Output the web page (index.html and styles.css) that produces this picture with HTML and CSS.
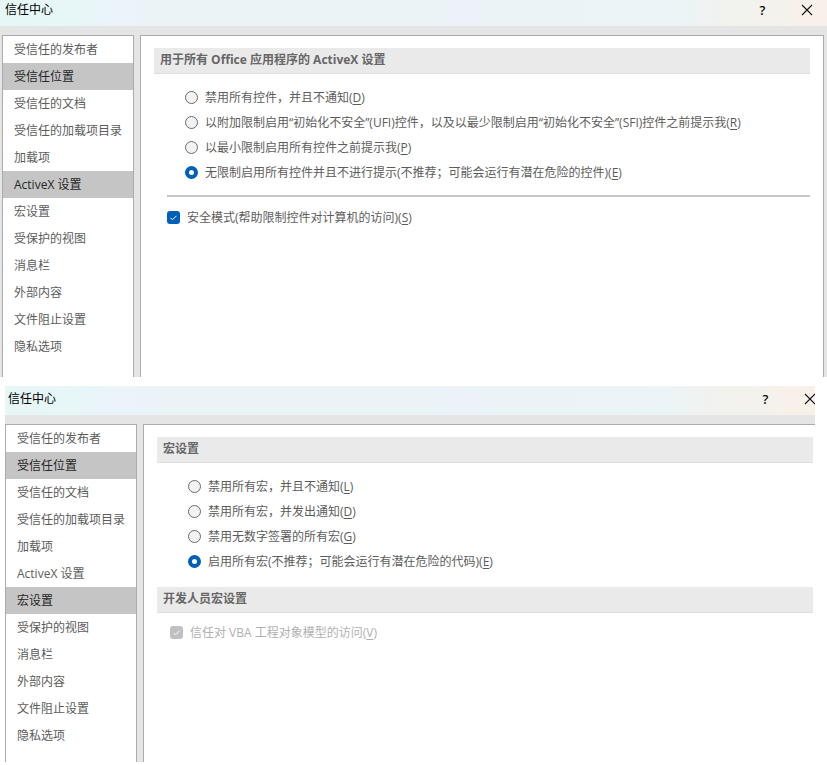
FILE: index.html
```html
<!DOCTYPE html>
<html lang="zh-CN">
<head>
<meta charset="utf-8">
<meta name="viewport" content="width=device-width, initial-scale=1">
<title>信任中心</title>
<link rel="stylesheet" href="styles.css">
</head>
<body>
<section class="dialog" aria-label="信任中心 ActiveX 设置">
  <header class="titlebar">
    <h1 class="title">信任中心</h1>
    <button class="caption-btn" type="button" aria-label="帮助">?</button>
    <button class="caption-btn" type="button" aria-label="关闭"><svg class="close-icon" viewBox="0 0 12 12" aria-hidden="true"><path d="M1 1 11 11M11 1 1 11"/></svg></button>
  </header>
  <div class="body">
    <nav class="sidebar">
      <a class="item" href="#">受信任的发布者</a>
      <a class="item selected" href="#">受信任位置</a>
      <a class="item" href="#">受信任的文档</a>
      <a class="item" href="#">受信任的加载项目录</a>
      <a class="item" href="#">加载项</a>
      <a class="item selected" href="#">ActiveX 设置</a>
      <a class="item" href="#">宏设置</a>
      <a class="item" href="#">受保护的视图</a>
      <a class="item" href="#">消息栏</a>
      <a class="item" href="#">外部内容</a>
      <a class="item" href="#">文件阻止设置</a>
      <a class="item" href="#">隐私选项</a>
    </nav>
    <main class="panel">
      <h2 class="heading">用于所有 Office 应用程序的 ActiveX 设置</h2>
      <div class="options">
        <label class="option"><input class="radio" type="radio" name="activex"><span>禁用所有控件，并且不通知(<u>D</u>)</span></label>
        <label class="option"><input class="radio" type="radio" name="activex"><span>以附加限制启用“初始化不安全”(UFI)控件，以及以最少限制启用“初始化不安全”(SFI)控件之前提示我(<u>R</u>)</span></label>
        <label class="option"><input class="radio" type="radio" name="activex"><span>以最小限制启用所有控件之前提示我(<u>P</u>)</span></label>
        <label class="option"><input class="radio" type="radio" name="activex" checked><span>无限制启用所有控件并且不进行提示(不推荐；可能会运行有潜在危险的控件)(<u>E</u>)</span></label>
      </div>
      <hr class="divider">
      <label class="option check-row"><span class="check"><input class="box" type="checkbox" checked><svg class="tick" viewBox="0 0 13 13" aria-hidden="true"><path d="M3.5 6.8 5.5 8.8 9.5 4.8"/></svg></span><span>安全模式(帮助限制控件对计算机的访问)(<u>S</u>)</span></label>
    </main>
  </div>
</section>

<section class="dialog cropped" aria-label="信任中心 宏设置">
  <header class="titlebar">
    <h1 class="title">信任中心</h1>
    <button class="caption-btn" type="button" aria-label="帮助">?</button>
    <button class="caption-btn" type="button" aria-label="关闭"><svg class="close-icon" viewBox="0 0 12 12" aria-hidden="true"><path d="M1 1 11 11M11 1 1 11"/></svg></button>
  </header>
  <div class="body">
    <nav class="sidebar">
      <a class="item" href="#">受信任的发布者</a>
      <a class="item selected" href="#">受信任位置</a>
      <a class="item" href="#">受信任的文档</a>
      <a class="item" href="#">受信任的加载项目录</a>
      <a class="item" href="#">加载项</a>
      <a class="item" href="#">ActiveX 设置</a>
      <a class="item selected" href="#">宏设置</a>
      <a class="item" href="#">受保护的视图</a>
      <a class="item" href="#">消息栏</a>
      <a class="item" href="#">外部内容</a>
      <a class="item" href="#">文件阻止设置</a>
      <a class="item" href="#">隐私选项</a>
    </nav>
    <main class="panel">
      <h2 class="heading">宏设置</h2>
      <div class="options">
        <label class="option"><input class="radio" type="radio" name="macro"><span>禁用所有宏，并且不通知(<u>L</u>)</span></label>
        <label class="option"><input class="radio" type="radio" name="macro"><span>禁用所有宏，并发出通知(<u>D</u>)</span></label>
        <label class="option"><input class="radio" type="radio" name="macro"><span>禁用无数字签署的所有宏(<u>G</u>)</span></label>
        <label class="option"><input class="radio" type="radio" name="macro" checked><span>启用所有宏(不推荐；可能会运行有潜在危险的代码)(<u>E</u>)</span></label>
      </div>
      <h2 class="heading">开发人员宏设置</h2>
      <label class="option check-row disabled"><span class="check"><input class="box" type="checkbox" checked disabled><svg class="tick" viewBox="0 0 13 13" aria-hidden="true"><path d="M3.5 6.8 5.5 8.8 9.5 4.8"/></svg></span><span>信任对 VBA 工程对象模型的访问(<u>V</u>)</span></label>
    </main>
  </div>
</section>
</body>
</html>
```
FILE: styles.css
```css
* {
  box-sizing: border-box;
}

body {
  margin: 0;
  background: #fff;
  color: #5c5c5c;
  font: 12px/20px "Open Sans", "Noto Sans CJK SC", sans-serif;
}

.dialog {
  background: #e5e5e5;
}

.titlebar {
  display: flex;
  align-items: center;
  padding: 0 0 6px 5px;
  background: linear-gradient(90deg, #e6f7f6 0%, #e8f6f7 10%, #ebf3fb 13%, #ebf3fb 16%, #eaf4f7 19%, #eaf4f7 53%, #edf2f9 56%, #eaf4f7 60%, #ebf4f6 82%, #f2f2ee 88%, #f3f2ed 93%, #f8f1ea 97%);
  color: #000;
}

.title {
  flex: 1;
  margin: 0;
  font-size: 12px;
  font-weight: 400;
}

.caption-btn {
  display: flex;
  flex: none;
  align-items: center;
  justify-content: center;
  width: 45px;
  height: 20px;
  padding: 0;
  border: 0;
  background: none;
  color: #000;
  font: 500 13px/20px "Noto Sans", sans-serif;
}

.caption-btn:last-child {
  width: 40px;
  margin-left: 2px;
}

.close-icon {
  width: 12px;
  height: 12px;
  fill: none;
  stroke: #111;
  stroke-width: 1.1;
}

.body {
  display: flex;
  gap: 6px;
  padding: 9px 3px 0 2px;
}

.sidebar {
  flex: none;
  width: 132px;
  padding-bottom: 17px;
  border: 1px solid #ababab;
  border-bottom: 0;
  background: #fff;
}

.item {
  display: block;
  padding: 0 11px;
  color: #5c5c5c;
  line-height: 27px;
  text-decoration: none;
  white-space: nowrap;
}

.item.selected {
  background: #c5c5c5;
  color: #262626;
}

.panel {
  flex: 1;
  min-width: 0;
  padding: 12px 13px 0;
  border: 1px solid #ababab;
  border-bottom: 0;
  background: #fff;
}

.heading {
  margin: 0;
  padding: 0 6px 2px;
  border-bottom: 1px solid #dedede;
  background: #eaeaea;
  color: #666;
  font-size: 12px;
  font-weight: 700;
  line-height: 23px;
}

.options {
  padding: 11px 0 13px 31px;
}

.option {
  display: flex;
  align-items: center;
  gap: 7px;
  min-height: 25px;
}

.option u {
  text-underline-offset: 2px;
}

.radio,
.box {
  flex: none;
  width: 13px;
  height: 13px;
  margin: 0;
  appearance: none;
}

.radio {
  border: 1px solid #6b6b6b;
  border-radius: 50%;
  background: #f3f3f3;
}

.radio:checked {
  border: 4px solid #005fb8;
  background: #fff;
}

.divider {
  height: 2px;
  margin: -3px 0 8px 13px;
  border: 0;
  background: #c6c6c6;
}

.check-row {
  padding-left: 13px;
}

.check {
  display: grid;
  flex: none;
}

.box,
.tick {
  grid-area: 1 / 1;
}

.box {
  border-radius: 3px;
  background: #005fb8;
}

.tick {
  width: 13px;
  height: 13px;
  fill: none;
  stroke: #fff;
  pointer-events: none;
}

.disabled {
  margin-top: 7px;
  color: #b1b1b1;
}

.disabled .box {
  background: #c0c0c0;
}

/* Second window: its right edge is cut off by the container */
.cropped {
  margin: 9px 12px 0 5px;
}

.cropped .titlebar {
  padding: 3px 0 6px 3px;
  overflow: hidden;
}

.cropped .caption-btn:last-child {
  margin-right: -15px;
}

.cropped .body {
  padding: 9px 0 0;
}

.cropped .sidebar {
  padding-bottom: 13px;
}

.cropped .panel {
  padding-right: 2px;
  border-right: 0;
}
```
